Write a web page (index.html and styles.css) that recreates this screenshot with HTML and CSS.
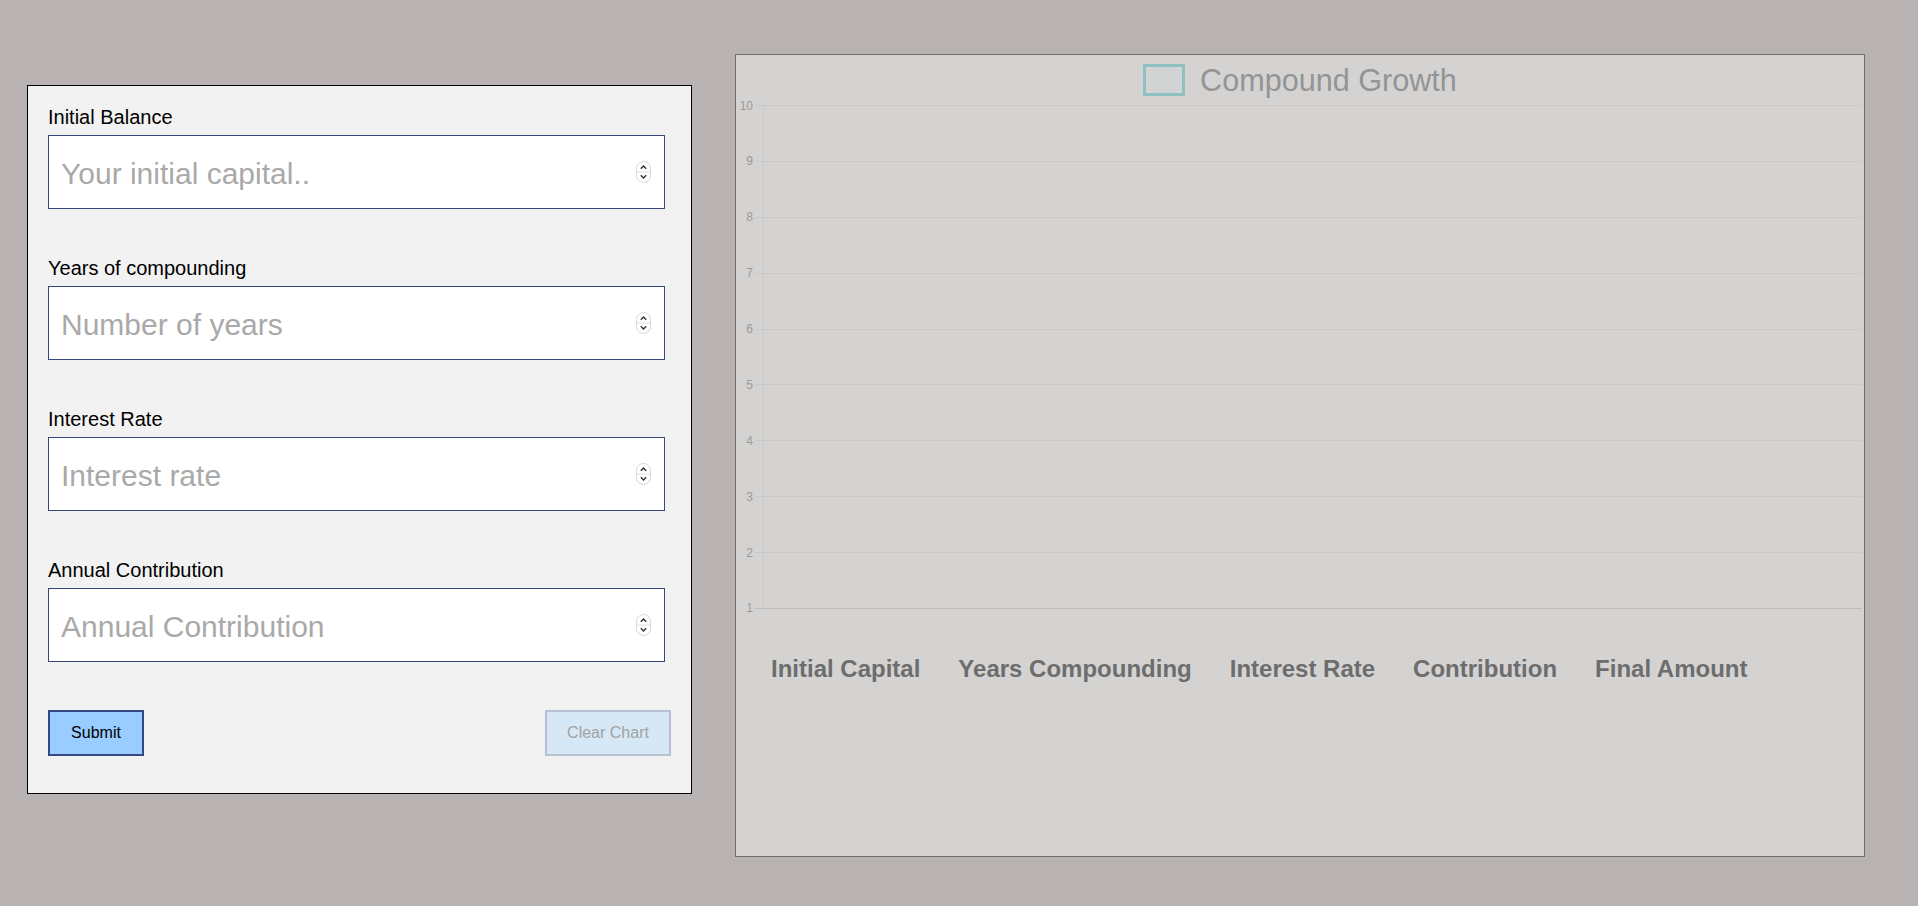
FILE: index.html
```html
<!DOCTYPE html>
<html lang="en">
<head>
<meta charset="utf-8">
<title>Compound Growth</title>
<link rel="stylesheet" href="styles.css">
</head>
<body>
<main class="page">
  <form class="card">
    <div class="group">
      <label class="label" for="initial">Initial Balance</label>
      <div class="field">
        <input class="input" id="initial" type="number" placeholder="Your initial capital..">
        <svg class="spin" width="15" height="22" viewBox="0 0 15 22"><rect x="0.5" y="0.5" width="14" height="21" rx="7" fill="#fff" stroke="#d6d6d6"/><line x1="1" y1="11" x2="14" y2="11" stroke="#e0e0e0"/><path d="M4.8 7.8 L7.5 5 L10.2 7.8" fill="none" stroke="#333" stroke-width="1.4"/><path d="M4.8 14.2 L7.5 17 L10.2 14.2" fill="none" stroke="#333" stroke-width="1.4"/></svg>
      </div>
    </div>
    <div class="group">
      <label class="label" for="years">Years of compounding</label>
      <div class="field">
        <input class="input" id="years" type="number" placeholder="Number of years">
        <svg class="spin" width="15" height="22" viewBox="0 0 15 22"><rect x="0.5" y="0.5" width="14" height="21" rx="7" fill="#fff" stroke="#d6d6d6"/><line x1="1" y1="11" x2="14" y2="11" stroke="#e0e0e0"/><path d="M4.8 7.8 L7.5 5 L10.2 7.8" fill="none" stroke="#333" stroke-width="1.4"/><path d="M4.8 14.2 L7.5 17 L10.2 14.2" fill="none" stroke="#333" stroke-width="1.4"/></svg>
      </div>
    </div>
    <div class="group">
      <label class="label" for="rate">Interest Rate</label>
      <div class="field">
        <input class="input" id="rate" type="number" placeholder="Interest rate">
        <svg class="spin" width="15" height="22" viewBox="0 0 15 22"><rect x="0.5" y="0.5" width="14" height="21" rx="7" fill="#fff" stroke="#d6d6d6"/><line x1="1" y1="11" x2="14" y2="11" stroke="#e0e0e0"/><path d="M4.8 7.8 L7.5 5 L10.2 7.8" fill="none" stroke="#333" stroke-width="1.4"/><path d="M4.8 14.2 L7.5 17 L10.2 14.2" fill="none" stroke="#333" stroke-width="1.4"/></svg>
      </div>
    </div>
    <div class="group">
      <label class="label" for="contrib">Annual Contribution</label>
      <div class="field">
        <input class="input" id="contrib" type="number" placeholder="Annual Contribution">
        <svg class="spin" width="15" height="22" viewBox="0 0 15 22"><rect x="0.5" y="0.5" width="14" height="21" rx="7" fill="#fff" stroke="#d6d6d6"/><line x1="1" y1="11" x2="14" y2="11" stroke="#e0e0e0"/><path d="M4.8 7.8 L7.5 5 L10.2 7.8" fill="none" stroke="#333" stroke-width="1.4"/><path d="M4.8 14.2 L7.5 17 L10.2 14.2" fill="none" stroke="#333" stroke-width="1.4"/></svg>
      </div>
    </div>
    <div class="actions">
      <button class="btn btn-submit" type="button">Submit</button>
      <button class="btn btn-clear" type="button">Clear Chart</button>
    </div>
  </form>

  <section class="chart">
    <div class="legend">
      <span class="legend-box"></span>
      <span class="legend-text">Compound Growth</span>
    </div>
    <div class="plot">
      <div class="yaxis">
        <span class="tick">10</span>
        <span class="tick">9</span>
        <span class="tick">8</span>
        <span class="tick">7</span>
        <span class="tick">6</span>
        <span class="tick">5</span>
        <span class="tick">4</span>
        <span class="tick">3</span>
        <span class="tick">2</span>
        <span class="tick">1</span>
      </div>
      <div class="grid">
        <div class="row"></div>
        <div class="row"></div>
        <div class="row"></div>
        <div class="row"></div>
        <div class="row"></div>
        <div class="row"></div>
        <div class="row"></div>
        <div class="row"></div>
        <div class="row"></div>
      </div>
    </div>
    <div class="xlabels">
      <span class="xlabel">Initial Capital</span>
      <span class="xlabel">Years Compounding</span>
      <span class="xlabel">Interest Rate</span>
      <span class="xlabel">Contribution</span>
      <span class="xlabel">Final Amount</span>
    </div>
  </section>
</main>
</body>
</html>
```

FILE: styles.css
```css
* {
  box-sizing: border-box;
}

html, body {
  margin: 0;
  padding: 0;
  height: 100%;
  overflow: hidden;
}

body {
  background: #b8b2b2;
  font-family: "Liberation Sans", Arial, Helvetica, sans-serif;
}

.page {
  display: flex;
  align-items: flex-start;
  gap: 43px;
  padding: 54px 0 0 27px;
}

/* ---------- form card ---------- */
.card {
  width: 665px;
  margin: 31px 0 0 0;
  background: #f2f2f2;
  border: 1px solid #000;
  padding: 20px 20px 37px 20px;
  display: flex;
  flex-direction: column;
}

.group {
  display: flex;
  flex-direction: column;
  margin-bottom: 48px;
}

.label {
  font-size: 20px;
  line-height: 23px;
  color: #000;
  margin-bottom: 6px;
}

.field {
  position: relative;
  width: 617px;
  height: 74px;
}

.input {
  width: 617px;
  height: 74px;
  margin: 0;
  border: 1px solid #34487c;
  border-radius: 0;
  background: #fff;
  padding: 3px 40px 0 12px;
  font-family: "Liberation Sans", Arial, Helvetica, sans-serif;
  font-size: 30px;
  color: #000;
  outline: none;
  -moz-appearance: textfield;
  appearance: textfield;
}

.input::placeholder {
  color: #a9a9a9;
  opacity: 1;
}

.input::-webkit-inner-spin-button,
.input::-webkit-outer-spin-button {
  -webkit-appearance: none;
  margin: 0;
}

.spin {
  position: absolute;
  right: 14px;
  top: 26px;
  display: block;
  pointer-events: none;
}

.actions {
  display: flex;
  justify-content: space-between;
  align-items: center;
}

.btn {
  height: 46px;
  margin: 0;
  padding: 0;
  border-radius: 0;
  font-family: "Liberation Sans", Arial, Helvetica, sans-serif;
  font-size: 16px;
  text-align: center;
  cursor: pointer;
}

.btn-submit {
  width: 96px;
  background: #99ccff;
  border: 2px solid #34497d;
  color: #000;
}

.btn-clear {
  width: 126px;
  background: #d6e8f6;
  border: 2px solid #b9c0d3;
  color: #a2a2a2;
}

/* ---------- chart ---------- */
.chart {
  width: 1130px;
  height: 803px;
  background: #d4d3d2;
  border: 1px solid #6f6b6b;
  display: flex;
  flex-direction: column;
}

.legend {
  display: flex;
  align-items: center;
  justify-content: center;
  gap: 15px;
  padding-top: 9px;
  height: 41px;
}

.legend-box {
  width: 42px;
  height: 32px;
  border: 3px solid #90bfc0;
  background: #d1d4d3;
}

.legend-text {
  font-size: 30.6px;
  color: #949494;
}

.plot {
  display: flex;
  margin-top: 9px;
  padding-right: 2px;
}

.yaxis {
  width: 19px;
  height: 504px;
  display: flex;
  flex-direction: column;
  justify-content: space-between;
  align-items: flex-end;
  padding-right: 2px;
}

.tick {
  height: 1px;
  display: flex;
  align-items: center;
  font-size: 12px;
  color: #9a9a9a;
  white-space: nowrap;
}

.grid {
  flex: 1;
  height: 504px;
  display: flex;
  flex-direction: column;
  border-bottom: 1px solid #bebdbc;
  background: linear-gradient(#c9c8c7, #c9c8c7) 8px 0 / 1px 100% no-repeat;
}

.row {
  flex: 1;
  border-top: 1px solid #cac9c8;
}

.xlabels {
  display: flex;
  gap: 38px;
  padding-left: 35px;
  margin-top: 46px;
}

.xlabel {
  font-size: 24px;
  font-weight: bold;
  color: #6d6d6d;
  white-space: nowrap;
}
```
